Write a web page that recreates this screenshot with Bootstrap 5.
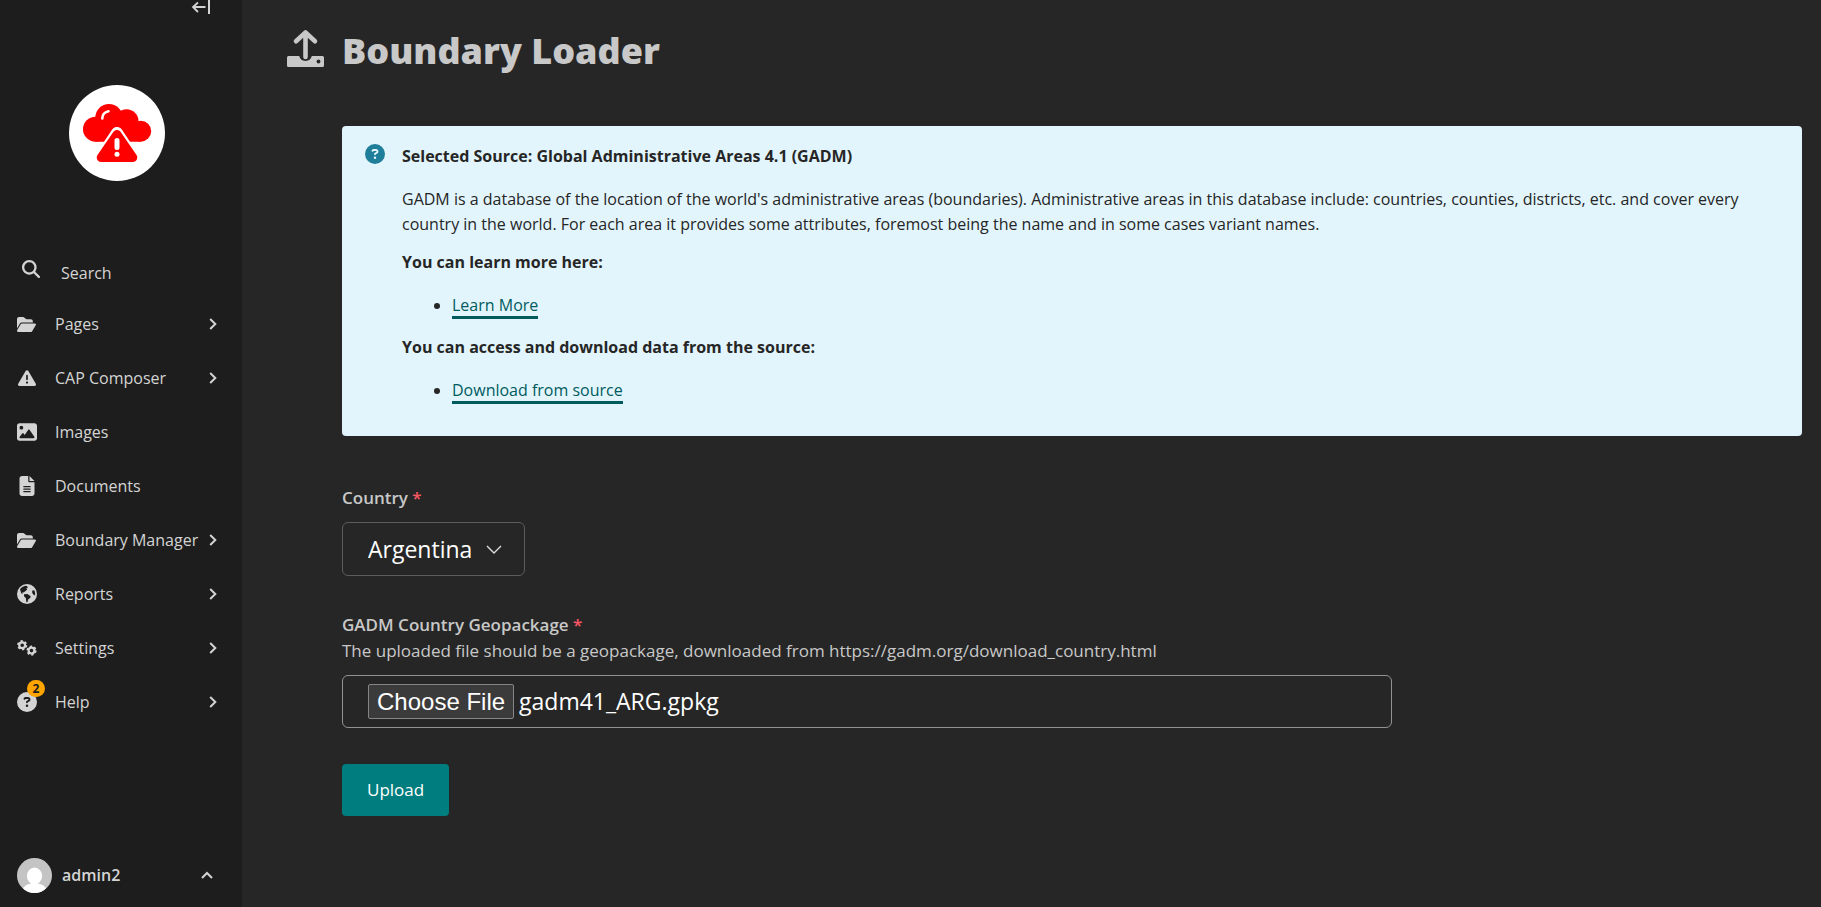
<!DOCTYPE html>
<html lang="en">
<head>
<meta charset="utf-8">
<meta name="viewport" content="width=device-width, initial-scale=1">
<title>Boundary Loader</title>
<link href="https://cdn.jsdelivr.net/npm/bootstrap@5.3.0/dist/css/bootstrap.min.css" rel="stylesheet">
<style>
body { font-family: "Open Sans", "Noto Sans", sans-serif; font-size: 16px; line-height: 24px; background: #262626; color: #c8c8c8; }
svg { display: block; flex: none; }
.side-panel { width: 242px; background: #1d1d1d; color: #d4d4d4; position: sticky; top: 0; }
.side-panel button, .side-panel a { color: inherit; }
.collapse-btn { margin-right: 31px; }
.brand { margin: 71px 0 68px; padding-right: 8px; }
.side-link { height: 54px; padding: 0 25px 0 17px; }
.side-search { height: 48px; gap: 21px; padding: 0 0 0 22px; }
.side-search svg { margin-bottom: 8px; }
.icon-slot { width: 20px; margin-right: 18px; }
.notice-count { left: 10px; top: -12px; width: 18px; height: 17px; line-height: 17px; font-size: 12px; background: #ffa500; color: #1d1d1d; }
.account { height: 64px; padding: 0 29px 0 17px; gap: 10px; }
.content { padding: 28px 19px 40px 45px; }
.page-head { gap: 18px; margin-bottom: 52px; }
.page-head h1 { font-size: 36px; line-height: 46px; font-weight: 800; }
.indent { margin-left: 55px; }
.info-box { background: #e2f5fc; color: #262626; border-radius: 4px; padding: 18px 24px 32px 23px; gap: 17px; line-height: 25px; margin-bottom: 49px; }
.info-box p { margin-bottom: 13px; }
.info-box ul { margin: 0 0 16px; padding-left: 50px; }
.info-box p.has-list, .info-box .lead-line { margin-bottom: 18px; }
.info-box a { display: inline-block; color: #005b5e; border-bottom: 3px solid #005b5e; line-height: 22px; }
.upload-form { max-width: 1050px; font-size: 17px; line-height: 26px; }
.form-field { margin-bottom: 36px; }
.field-label { font-weight: 600; }
.above-control { margin-bottom: 11px; }
.req { color: #fd5765; }
.country-select { width: 183px; height: 54px; padding: 0 50px 0 25px; border: 1px solid #5c5c5c; border-radius: 6px; color: #fff; font-size: 23px; background: #262626 url("data:image/svg+xml,%3Csvg xmlns='http://www.w3.org/2000/svg' viewBox='0 0 16 9'%3E%3Cpath d='M1 1l7 7 7-7' fill='none' stroke='%23ddd' stroke-width='1.4'/%3E%3C/svg%3E") no-repeat right 22px center / 16px 9px; }
.file-box, .file-box:hover { height: 53px; padding: 8px 25px; border: 1px solid #929292; border-radius: 6px; background: #262626; color: #fff; font-size: 23px; line-height: 33px; }
.file-box::file-selector-button, .file-box:hover:not(:disabled):not([readonly])::file-selector-button { height: 35px; margin: 0 5px 0 0; padding: 0 8px; border: 1px solid #858585; border-radius: 2px; background: #3b3b3b; color: #fff; font-family: "Liberation Sans", sans-serif; font-size: 24px; line-height: 30px; }
.upload-btn { height: 52px; padding: 0 25px; border-radius: 4px; background: #007d7e; color: #fff; font-size: 17px; }
</style>
</head>
<body>
<svg class="d-none" xmlns="http://www.w3.org/2000/svg">
  <symbol id="i-folder" viewBox="0 0 576 512"><path d="M88.7 223.8L0 375.8V96C0 60.7 28.7 32 64 32H181.5c17 0 33.3 6.7 45.3 18.700l26.500 26.500c12 12 28.300 18.700 45.300 18.700H416c35.300 0 64 28.700 64 64v32H144c-22.800 0-43.800 12.100-55.300 31.800zm27.600 16.100C122.100 230 132.600 224 144 224H544c11.500 0 22 6.100 27.700 16.100s5.700 22.200-.1 32.100l-112 192C453.900 474 443.400 480 432 480H32c-11.500 0-22-6.100-27.700-16.100s-5.700-22.200 .1-32.100l112-192z"/></symbol>
  <symbol id="i-warn" viewBox="0 0 512 512"><path d="M256 32c14.2 0 27.3 7.500 34.500 19.800l216 368c7.300 12.400 7.300 27.700 .2 40.100S486.300 480 472 480H40c-14.300 0-27.600-7.700-34.700-20.100s-7-27.800 .2-40.100l216-368C228.700 39.500 241.800 32 256 32zm0 128c-13.300 0-24 10.700-24 24V296c0 13.300 10.700 24 24 24s24-10.700 24-24V184c0-13.300-10.700-24-24-24zm32 224a32 32 0 1 0 -64 0 32 32 0 1 0 64 0z"/></symbol>
  <symbol id="i-image" viewBox="0 0 512 512"><path d="M0 96C0 60.700 28.700 32 64 32H448c35.300 0 64 28.700 64 64V416c0 35.300-28.700 64-64 64H64c-35.300 0-64-28.700-64-64V96zM323.800 202.500c-4.500-6.600-11.900-10.500-19.800-10.500s-15.400 3.900-19.800 10.500l-87 127.600L170.700 297c-4.600-5.700-11.500-9-18.700-9s-14.200 3.300-18.700 9l-64 80c-5.800 7.200-6.900 17.100-2.900 25.400s12.400 13.600 21.600 13.600h96 32H424c8.900 0 17.100-4.900 21.200-12.800s3.600-17.400-1.400-24.700l-120-176zM112 192a48 48 0 1 0 0-96 48 48 0 1 0 0 96z"/></symbol>
  <symbol id="i-doc" viewBox="0 0 384 512"><path d="M64 0C28.700 0 0 28.700 0 64V448c0 35.300 28.700 64 64 64H320c35.300 0 64-28.700 64-64V160H256c-17.700 0-32-14.300-32-32V0H64zM256 0V128H384L256 0zM112 256H272a16 16 0 0 1 0 32H112a16 16 0 0 1 0-32zm0 64H272a16 16 0 0 1 0 32H112a16 16 0 0 1 0-32zm0 64H272a16 16 0 0 1 0 32H112a16 16 0 0 1 0-32z"/></symbol>
  <symbol id="i-help" viewBox="0 0 512 512"><path d="M256 512A256 256 0 1 0 256 0a256 256 0 1 0 0 512zM169.800 165.300c7.900-22.300 29.100-37.300 52.800-37.300h58.300c34.900 0 63.100 28.300 63.100 63.100c0 22.600-12.100 43.500-31.700 54.800L280 264.400c-.2 13-10.900 23.600-24 23.600c-13.300 0-24-10.700-24-24V250.500c0-8.600 4.600-16.500 12.100-20.800l44.300-25.400c4.700-2.700 7.600-7.700 7.600-13.100c0-8.400-6.800-15.100-15.100-15.100H222.600c-3.400 0-6.400 2.100-7.500 5.300l-.4 1.200c-4.400 12.500-18.200 19-30.600 14.600s-19-18.200-14.600-30.600l.4-1.200zM224 352a32 32 0 1 1 64 0 32 32 0 1 1 -64 0z"/></symbol>
  <symbol id="i-next" viewBox="0 0 8 12"><path d="M1.200 1L6.300 6 1.200 11" fill="none" stroke="currentColor" stroke-width="2"/></symbol>
</svg>

<div class="d-flex min-vh-100">
  <aside class="side-panel flex-shrink-0 vh-100 d-flex flex-column">
    <button type="button" class="btn border-0 p-0 align-self-end collapse-btn" aria-label="Collapse sidebar">
      <svg width="20" height="14" viewBox="0 0 20 14" fill="none" stroke="currentColor" stroke-width="1.800"><path d="M7 2.500L2 7l5 5M2 7h12.500"/><path d="M18 0v14" stroke-width="2"/></svg>
    </button>
    <a href="#" class="brand d-flex justify-content-center" aria-label="Home">
      <svg width="96" height="96" viewBox="0 0 96 96">
        <circle cx="48" cy="48" r="48" fill="#fff"/>
        <g fill="#f00"><circle cx="26.500" cy="44.200" r="12.500"/><circle cx="40" cy="32.700" r="13.700"/><circle cx="57.500" cy="36.200" r="12"/><circle cx="71.700" cy="46.200" r="10.500"/><path d="M26.500 36h40l5.200 8v12.700H26.500z"/></g>
        <path d="M33.300 33.500C33.300 29.500 36 27 39.500 26.200" fill="none" stroke="#fff" stroke-width="2.600" stroke-linecap="round"/>
        <path d="M48 48L65 73.500H31z" fill="#fff" stroke="#fff" stroke-width="12" stroke-linejoin="round"/>
        <path d="M48 49.500L63.800 72.500H32.200z" fill="#f00" stroke="#f00" stroke-width="9" stroke-linejoin="round"/>
        <path d="M48 55.500v7" stroke="#fff" stroke-width="5" stroke-linecap="round"/><circle cx="48" cy="69.200" r="2.500" fill="#fff"/>
      </svg>
    </a>
    <button type="button" class="btn border-0 rounded-0 side-search d-flex align-items-center">
      <svg width="18" height="18" viewBox="0 0 512 512" fill="currentColor"><path d="M416 208c0 45.900-14.900 88.300-40 122.700L502.600 457.400c12.500 12.500 12.500 32.800 0 45.300s-32.800 12.500-45.300 0L330.700 376c-34.400 25.200-76.800 40-122.700 40C93.100 416 0 322.900 0 208S93.100 0 208 0S416 93.100 416 208zM208 352a144 144 0 1 0 0-288 144 144 0 1 0 0 288z"/></svg>
      <span>Search</span>
    </button>
    <nav class="nav flex-column flex-nowrap" aria-label="Main">
      <a href="#" class="side-link d-flex align-items-center text-decoration-none"><span class="icon-slot"><svg width="19" height="17" fill="currentColor"><use href="#i-folder"/></svg></span><span class="flex-grow-1 text-nowrap">Pages</span><svg width="8" height="12"><use href="#i-next"/></svg></a>
      <a href="#" class="side-link d-flex align-items-center text-decoration-none"><span class="icon-slot"><svg width="20" height="18" fill="currentColor"><use href="#i-warn"/></svg></span><span class="flex-grow-1 text-nowrap">CAP Composer</span><svg width="8" height="12"><use href="#i-next"/></svg></a>
      <a href="#" class="side-link d-flex align-items-center text-decoration-none"><span class="icon-slot"><svg width="20" height="20" fill="currentColor"><use href="#i-image"/></svg></span><span class="flex-grow-1 text-nowrap">Images</span></a>
      <a href="#" class="side-link d-flex align-items-center text-decoration-none"><span class="icon-slot"><svg width="20" height="20" fill="currentColor"><use href="#i-doc"/></svg></span><span class="flex-grow-1 text-nowrap">Documents</span></a>
      <a href="#" class="side-link d-flex align-items-center text-decoration-none"><span class="icon-slot"><svg width="19" height="17" fill="currentColor"><use href="#i-folder"/></svg></span><span class="flex-grow-1 text-nowrap">Boundary Manager</span><svg width="8" height="12"><use href="#i-next"/></svg></a>
      <a href="#" class="side-link d-flex align-items-center text-decoration-none"><span class="icon-slot"><svg width="20" height="20" viewBox="0 0 20 20"><circle cx="10" cy="10" r="10" fill="currentColor"/><path fill="#1d1d1d" d="M3 5.200C4.500 3 7 1.700 9.500 1.700L11 3.300 9.300 4.400 10.300 5.600 8.200 7.200 6.600 8.600 5.300 8.300 5.600 10 4.200 9.200zM7 10.200L10.500 10 13.700 12.300 13.200 14 11.300 15.300 10.400 18.200H9.400L8.800 14 7 12.200zM15.700 6.300L17.500 6.600 18.300 10 17.500 11.400 15.800 10 15 8z"/></svg></span><span class="flex-grow-1 text-nowrap">Reports</span><svg width="8" height="12"><use href="#i-next"/></svg></a>
      <a href="#" class="side-link d-flex align-items-center text-decoration-none"><span class="icon-slot"><svg width="20" height="16" viewBox="0 0 20 16" fill="none" stroke="currentColor"><circle cx="5.200" cy="5.200" r="2.900" stroke-width="2.200"/><circle cx="5.200" cy="5.200" r="4.200" stroke-width="1.800" stroke-dasharray="2.200 2.200"/><circle cx="14.500" cy="10.600" r="2.900" stroke-width="2.200"/><circle cx="14.500" cy="10.600" r="4.200" stroke-width="1.800" stroke-dasharray="2.200 2.200"/></svg></span><span class="flex-grow-1 text-nowrap">Settings</span><svg width="8" height="12"><use href="#i-next"/></svg></a>
      <a href="#" class="side-link d-flex align-items-center text-decoration-none"><span class="icon-slot position-relative"><svg width="20" height="20" fill="currentColor"><use href="#i-help"/></svg><span class="notice-count position-absolute rounded-pill text-center fw-bold">2</span></span><span class="flex-grow-1 text-nowrap">Help</span><svg width="8" height="12"><use href="#i-next"/></svg></a>
    </nav>
    <button type="button" class="btn border-0 rounded-0 account mt-auto d-flex align-items-center">
      <svg width="35" height="35" viewBox="0 0 35 35"><clipPath id="round"><circle cx="17.500" cy="17.500" r="17.500"/></clipPath><g clip-path="url(#round)"><path fill="#c4c4c4" d="M0 0h35v35H0z"/><ellipse cx="17.500" cy="18" rx="7.600" ry="8.600" fill="#fff"/><path fill="#fff" d="M5 35c0-6 4-8.500 9-9.500h7c5 1 9 3.500 9 9.500z"/></g></svg>
      <span class="flex-grow-1 text-start fw-semibold">admin2</span>
      <svg width="12" height="8" viewBox="0 0 12 8" fill="none" stroke="currentColor" stroke-width="2"><path d="M1 7l5-5 5 5"/></svg>
    </button>
  </aside>

  <main class="content flex-grow-1">
    <header class="page-head d-flex align-items-start">
      <svg width="37" height="40" viewBox="0 0 37 40" fill="none" stroke="currentColor"><path d="M1.500 28H12.200a6.500 6.500 0 0 0 12.600 0H35.500a1.500 1.500 0 0 1 1.500 1.500V37.500a1.500 1.500 0 0 1-1.500 1.500H1.500A1.500 1.500 0 0 1 0 37.500V29.500A1.500 1.500 0 0 1 1.500 28z" fill="currentColor" stroke="none"/><circle cx="31.500" cy="33.500" r="1.900" fill="#262626" stroke="none"/><path d="M18.500 29V5M9 13.200L18.500 4.500l9.500 8.700" stroke-width="4.600" stroke-linecap="round" stroke-linejoin="round"/></svg>
      <h1 class="mb-0">Boundary Loader</h1>
    </header>

    <section class="info-box indent d-flex align-items-start">
      <svg width="20" height="20" fill="#1f7e9a"><use href="#i-help"/></svg>
      <div>
        <p class="lead-line fw-bold">Selected Source: Global Administrative Areas 4.1 (GADM)</p>
        <p>GADM is a database of the location of the world's administrative areas (boundaries). Administrative areas in this database include: countries, counties, districts, etc. and cover every country in the world. For each area it provides some attributes, foremost being the name and in some cases variant names.</p>
        <p class="has-list fw-bold">You can learn more here:</p>
        <ul><li><a href="#" class="text-decoration-none">Learn More</a></li></ul>
        <p class="has-list fw-bold">You can access and download data from the source:</p>
        <ul class="mb-0"><li><a href="#" class="text-decoration-none">Download from source</a></li></ul>
      </div>
    </section>

    <form class="upload-form indent">
      <div class="form-field">
        <label class="field-label above-control d-block" for="country">Country <span class="req">*</span></label>
        <select id="country" class="form-select country-select"><option selected>Argentina</option></select>
      </div>
      <div class="form-field">
        <label class="field-label d-block" for="geopackage">GADM Country Geopackage <span class="req">*</span></label>
        <div id="geopackage-help" class="above-control">The uploaded file should be a geopackage, downloaded from https://gadm.org/download_country.html</div>
        <input id="geopackage" class="form-control file-box" type="file" aria-describedby="geopackage-help">
      </div>
      <button type="button" class="btn border-0 upload-btn">Upload</button>
    </form>
  </main>
</div>
<script src="https://cdn.jsdelivr.net/npm/bootstrap@5.3.0/dist/js/bootstrap.bundle.min.js"></script>
<script>
  // Preselect the current geopackage in the file field
  const picked = new DataTransfer();
  picked.items.add(new File([""], "gadm41_ARG.gpkg"));
  document.getElementById("geopackage").files = picked.files;
</script>
</body>
</html>
